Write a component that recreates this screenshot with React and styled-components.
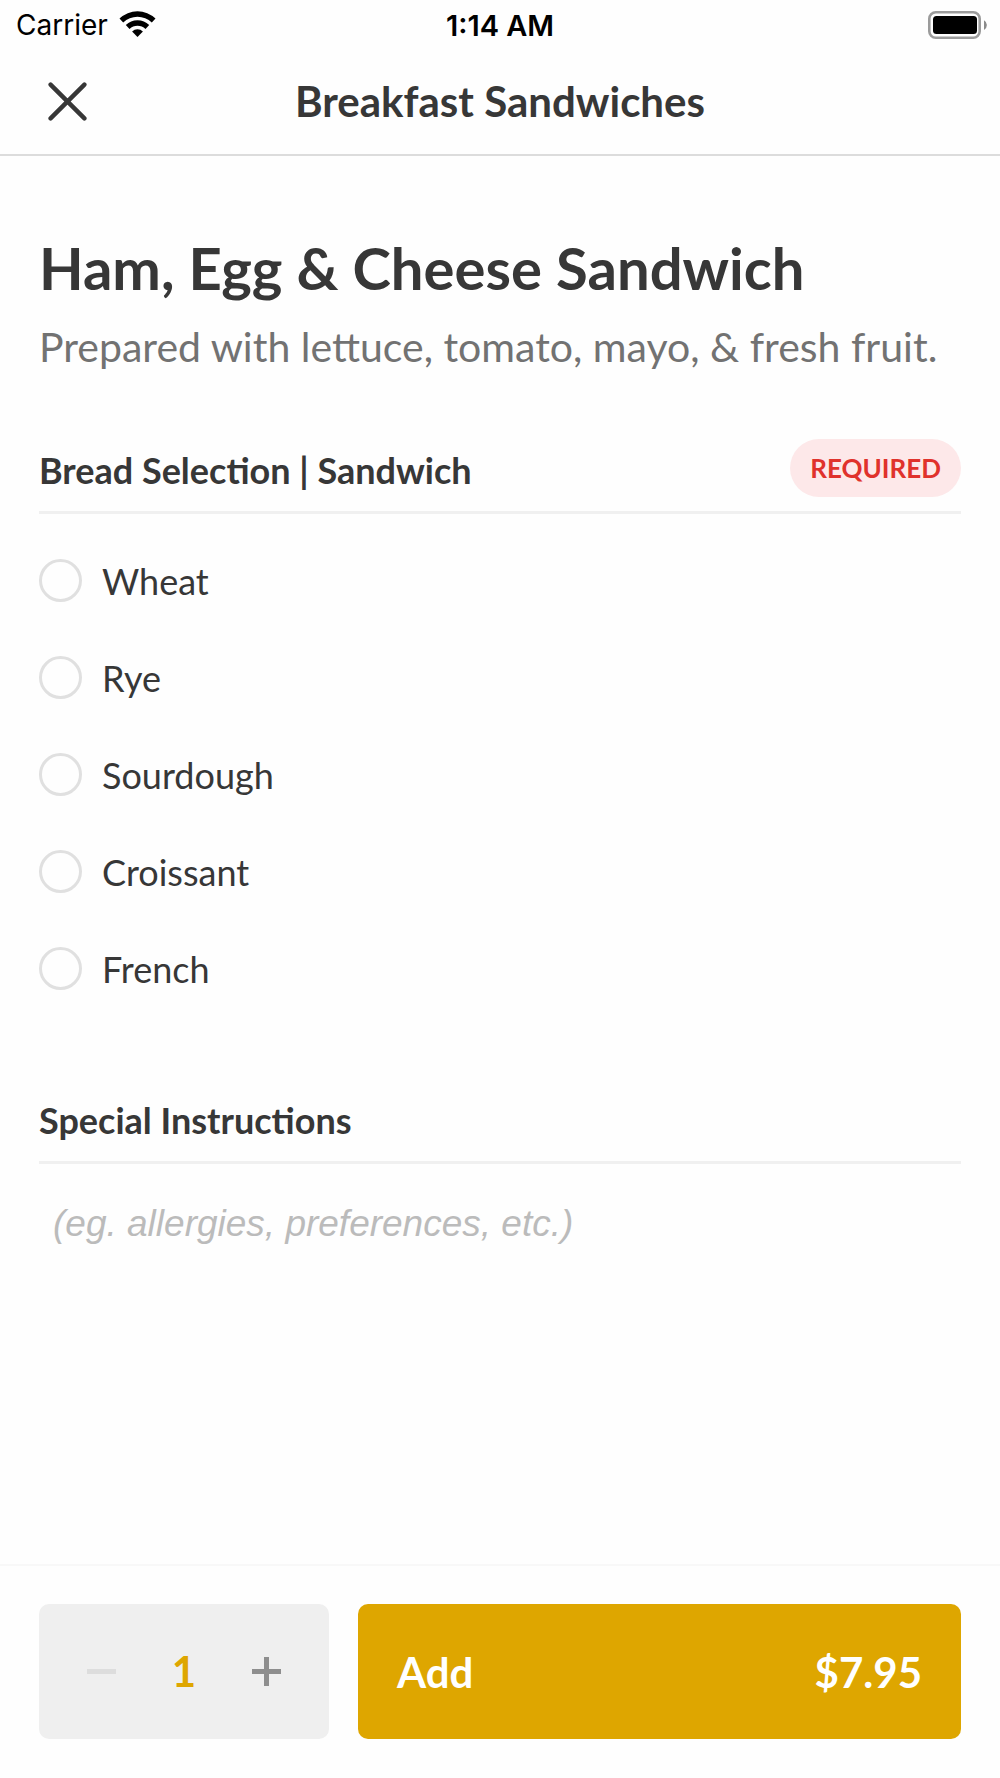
import { useState } from 'react';
import styled, { createGlobalStyle } from 'styled-components';

const GlobalStyle = createGlobalStyle`
  * {
    box-sizing: border-box;
  }

  body {
    margin: 0;
    background: #fefefe;
    color: #373737;
    font-family: Lato, 'Liberation Sans', sans-serif;
  }

  button,
  input,
  textarea {
    margin: 0;
    font-family: inherit;
  }
`;

const Screen = styled.div`
  display: flex;
  flex-direction: column;
  min-height: 100vh;
`;

const StatusBar = styled.div`
  display: grid;
  grid-template-columns: 1fr auto 1fr;
  align-items: center;
  height: 52px;
  padding: 0 12px 2px;
  color: #000;
  font-family: Inter, 'Liberation Sans', sans-serif;
  font-size: 28px;
`;

const Carrier = styled.div`
  display: flex;
  align-items: center;
  gap: 11px;
  padding-left: 4px;
`;

const WifiIcon = styled.svg`
  margin-bottom: 2px;
`;

const Clock = styled.time`
  font-size: 29px;
  font-weight: 600;
`;

const BatteryIcon = styled.svg`
  justify-self: end;
`;

const Header = styled.header`
  display: grid;
  grid-template-columns: 1fr auto 1fr;
  align-items: center;
  height: 104px;
  padding: 0 44px 4px;
  border-bottom: 2px solid #dcdcdc;
`;

const CloseButton = styled.button`
  display: flex;
  justify-self: start;
  padding: 4px;
  border: 0;
  background: none;
  color: #373737;
  cursor: pointer;
`;

const HeaderTitle = styled.div`
  font-size: 42px;
  font-weight: 700;
  line-height: 48px;
`;

const Content = styled.main`
  display: flex;
  flex: 1;
  flex-direction: column;
  padding: 76px 39px 0;
`;

const Title = styled.h1`
  margin: 0;
  font-size: 58px;
  font-weight: 700;
  line-height: 72px;
`;

const Description = styled.p`
  margin: 7px 0 56px;
  color: #727272;
  font-size: 41px;
  line-height: 72px;
`;

const SectionHeader = styled.div`
  display: flex;
  align-items: center;
  justify-content: space-between;
  padding-bottom: 14px;
  border-bottom: 3px solid #f0f0f0;
`;

const SectionTitle = styled.h2`
  margin: 0;
  padding-top: 4px;
  font-size: 36px;
  font-weight: 700;
  line-height: 54px;
`;

const Badge = styled.span`
  padding: 0 20px;
  border-radius: 29px;
  background: #fde8e9;
  color: #e0322c;
  font-size: 26px;
  font-weight: 700;
  line-height: 58px;
`;

const Options = styled.div`
  display: flex;
  flex-direction: column;
  padding: 18px 0 72px;
`;

const Option = styled.label`
  display: flex;
  align-items: center;
  gap: 20px;
  height: 97px;
  font-size: 36px;
  cursor: pointer;
`;

const Radio = styled.input`
  appearance: none;
  width: 43px;
  height: 43px;
  border: 3px solid #e0e0e0;
  border-radius: 50%;

  &:checked {
    border: 12px solid #dea600;
  }
`;

const Instructions = styled.textarea`
  flex: 1;
  width: 100%;
  min-height: 160px;
  padding: 36px 14px;
  border: 0;
  outline: 0;
  background: none;
  color: #373737;
  font-family: 'Liberation Sans', Arial, sans-serif;
  font-size: 37px;
  line-height: 48px;
  resize: none;

  &::placeholder {
    color: #bbb;
    font-style: italic;
  }
`;

const Footer = styled.footer`
  display: flex;
  gap: 29px;
  padding: 38px 39px 39px;
  border-top: 2px solid #f8f8f8;
`;

const Stepper = styled.div`
  display: flex;
  align-items: center;
  justify-content: center;
  gap: 41px;
  flex: 0 0 290px;
  height: 135px;
  border-radius: 10px;
  background: #efefef;
`;

const StepButton = styled.button`
  display: flex;
  padding: 6px;
  border: 0;
  background: none;
  color: #8e8e8e;
  cursor: pointer;

  &:disabled {
    color: #ddd;
    cursor: default;
  }
`;

const Quantity = styled.output`
  min-width: 42px;
  padding-bottom: 2px;
  color: #dea600;
  font-size: 42px;
  font-weight: 700;
  line-height: 48px;
  text-align: center;
`;

const AddButton = styled.button`
  display: flex;
  align-items: center;
  justify-content: space-between;
  flex: 1;
  padding: 0 39px;
  border: 0;
  border-radius: 10px;
  background: #dea600;
  color: #fff;
  font-size: 42px;
  font-weight: 700;
  line-height: 48px;
  cursor: pointer;
`;

const breads = ['Wheat', 'Rye', 'Sourdough', 'Croissant', 'French'];
const price = 7.95;

const App = () => {
  const [bread, setBread] = useState('');
  const [quantity, setQuantity] = useState(1);
  const [notes, setNotes] = useState('');

  return (
    <Screen>
      <GlobalStyle />
      <StatusBar>
        <Carrier>
          Carrier
          <WifiIcon width="37" height="28" viewBox="0 0 37 28" aria-hidden="true">
            <path d="M0.5 8.6a25.8 25.8 0 0 1 36 0l-3.7 3.8a20.6 20.6 0 0 0-28.6 0z" />
            <path d="M6.8 15.1a16.8 16.8 0 0 1 23.4 0l-3.7 3.8a11.5 11.5 0 0 0-16 0z" />
            <path d="M13.1 21.5a7.8 7.8 0 0 1 10.8 0l-5.4 5.5z" />
          </WifiIcon>
        </Carrier>
        <Clock>1:14 AM</Clock>
        <BatteryIcon width="60" height="28" viewBox="0 0 60 28" aria-hidden="true">
          <rect x="1.3" y="1.3" width="50.4" height="25.4" rx="6.5" fill="none" stroke="#9b9b9b" strokeWidth="2.6" />
          <rect x="5" y="5" width="44" height="18" rx="3.5" />
          <path d="M56 9.2a5.6 5.6 0 0 1 0 9.8z" fill="#8a8a8a" />
        </BatteryIcon>
      </StatusBar>
      <Header>
        <CloseButton type="button" aria-label="Close">
          <svg width="39" height="39" viewBox="0 0 39 39" fill="none" stroke="currentColor" strokeWidth="4.4" strokeLinecap="round">
            <path d="M2.6 2.6l33.8 33.8M36.4 2.6L2.6 36.4" />
          </svg>
        </CloseButton>
        <HeaderTitle>Breakfast Sandwiches</HeaderTitle>
      </Header>
      <Content>
        <Title>Ham, Egg &amp; Cheese Sandwich</Title>
        <Description>
          Prepared with lettuce, tomato, mayo, &amp; fresh fruit.
        </Description>
        <SectionHeader>
          <SectionTitle id="bread-title">Bread Selection | Sandwich</SectionTitle>
          <Badge>REQUIRED</Badge>
        </SectionHeader>
        <Options role="radiogroup" aria-labelledby="bread-title">
          {breads.map((name) => (
            <Option key={name}>
              <Radio
                type="radio"
                name="bread"
                value={name}
                checked={bread === name}
                onChange={(e) => setBread(e.target.value)}
              />
              {name}
            </Option>
          ))}
        </Options>
        <SectionHeader>
          <SectionTitle as="label" htmlFor="instructions">
            Special Instructions
          </SectionTitle>
        </SectionHeader>
        <Instructions
          id="instructions"
          placeholder="(eg. allergies, preferences, etc.)"
          value={notes}
          onChange={(e) => setNotes(e.target.value)}
        />
      </Content>
      <Footer>
        <Stepper>
          <StepButton
            type="button"
            aria-label="Decrease quantity"
            disabled={quantity === 1}
            onClick={() => setQuantity(quantity - 1)}
          >
            <svg width="29" height="29" viewBox="0 0 29 29" fill="currentColor">
              <path d="M0 12h29v5H0z" />
            </svg>
          </StepButton>
          <Quantity>{quantity}</Quantity>
          <StepButton
            type="button"
            aria-label="Increase quantity"
            onClick={() => setQuantity(quantity + 1)}
          >
            <svg width="29" height="29" viewBox="0 0 29 29" fill="currentColor">
              <path d="M0 12h12V0h5v12h12v5H17v12h-5V17H0z" />
            </svg>
          </StepButton>
        </Stepper>
        <AddButton type="button">
          <span>Add</span>
          <span>${(price * quantity).toFixed(2)}</span>
        </AddButton>
      </Footer>
    </Screen>
  );
};

export default App;
